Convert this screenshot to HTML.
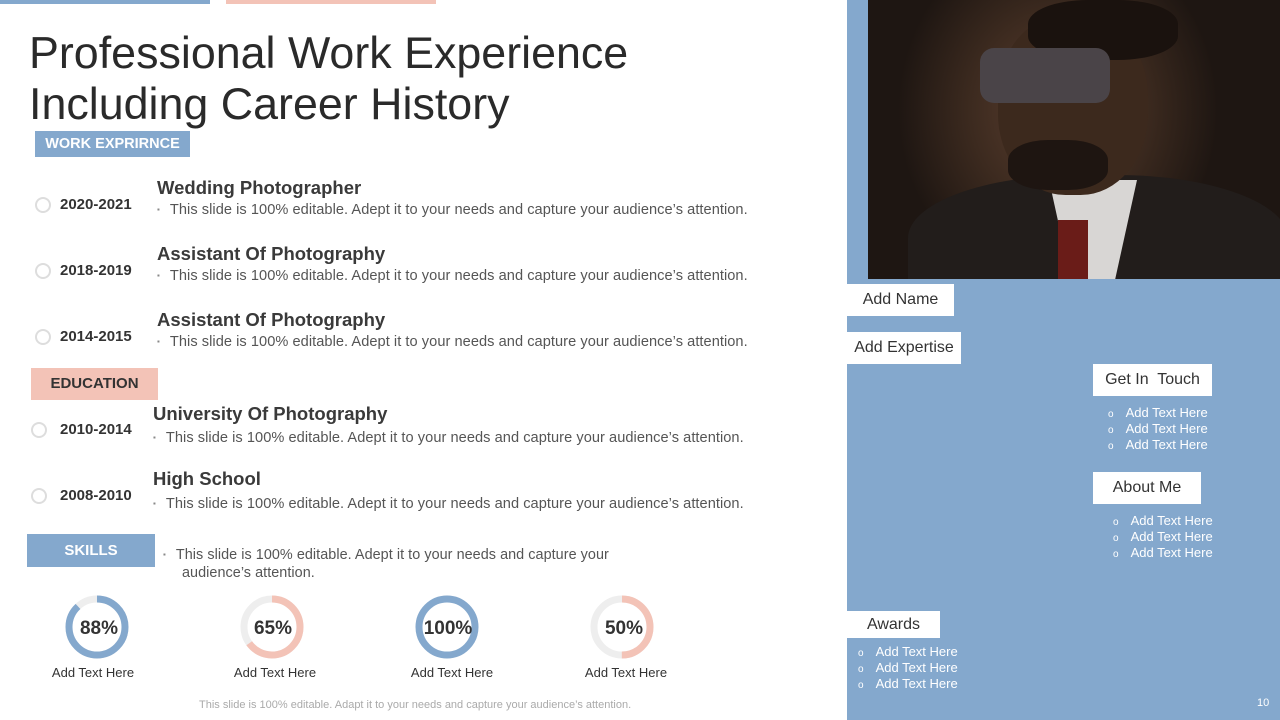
<!DOCTYPE html>
<html><head><meta charset="utf-8"><style>
body{margin:0;width:1280px;height:720px;position:relative;overflow:hidden;background:#fff;font-family:"Liberation Sans",sans-serif;color:#333}
.a{position:absolute;white-space:nowrap}
.h1{left:29px;top:28px;font-size:44.8px;line-height:51px;color:#2a2a2a}
.tag{position:absolute;font-weight:bold;font-size:15px;text-align:center;color:#fff}
.yr{font-weight:bold;font-size:15px;color:#333}
.ttl{font-weight:bold;font-size:18.5px;color:#3a3a3a}
.txt{font-size:14.6px;color:#555;letter-spacing:0.05px}
.txt:before{content:"▪";font-size:8px;color:#888;margin-right:10px;vertical-align:2px}
.circ{position:absolute;width:12px;height:12px;border:2px solid #ddd;border-radius:50%}
.wb{position:absolute;background:#fff;font-size:16px;color:#333;line-height:32px}
.li{position:absolute;color:#fff;font-size:13px}
.li div{line-height:16px;height:16px}
.li div:before{content:"o";font-size:10px;margin-right:12px}
.lab{font-size:13px;color:#333;text-align:center;width:120px}
</style></head><body>
<div class="a" style="left:0;top:0;width:210px;height:4px;background:#84a8cd"></div>
<div class="a" style="left:226px;top:0;width:210px;height:4px;background:#f3c3b7"></div>
<div class="a h1">Professional Work Experience<br>Including Career History</div>

<div class="tag" style="left:35px;top:131px;width:155px;height:26px;line-height:26px;background:#84a8cd;font-size:14.5px">WORK EXPRIRNCE</div>
<div class="circ" style="left:35px;top:197px"></div><div class="a yr" style="left:60px;top:196px">2020-2021</div>
<div class="a ttl" style="left:157px;top:177px">Wedding Photographer</div><div class="a txt" style="left:157px;top:202px">This slide is 100% editable. Adept it to your needs and capture your audience’s attention.</div>
<div class="circ" style="left:35px;top:263px"></div><div class="a yr" style="left:60px;top:262px">2018-2019</div>
<div class="a ttl" style="left:157px;top:243px">Assistant Of Photography</div><div class="a txt" style="left:157px;top:268px">This slide is 100% editable. Adept it to your needs and capture your audience’s attention.</div>
<div class="circ" style="left:35px;top:329px"></div><div class="a yr" style="left:60px;top:328px">2014-2015</div>
<div class="a ttl" style="left:157px;top:309px">Assistant Of Photography</div><div class="a txt" style="left:157px;top:334px">This slide is 100% editable. Adept it to your needs and capture your audience’s attention.</div>

<div class="tag" style="left:31px;top:368px;width:127px;height:32px;line-height:32px;background:#f3c3b7;color:#333">EDUCATION</div>
<div class="circ" style="left:31px;top:422px"></div><div class="a yr" style="left:60px;top:421px">2010-2014</div>
<div class="a ttl" style="left:153px;top:403px">University Of Photography</div><div class="a txt" style="left:153px;top:430px">This slide is 100% editable. Adept it to your needs and capture your audience’s attention.</div>
<div class="circ" style="left:31px;top:488px"></div><div class="a yr" style="left:60px;top:487px">2008-2010</div>
<div class="a ttl" style="left:153px;top:468px">High School</div><div class="a txt" style="left:153px;top:496px">This slide is 100% editable. Adept it to your needs and capture your audience’s attention.</div>

<div class="tag" style="left:27px;top:534px;width:128px;height:33px;line-height:33px;background:#84a8cd">SKILLS</div>
<div class="a txt" style="left:163px;top:546px;line-height:18px;font-size:14.4px">This slide is 100% editable. Adept it to your needs and capture your<br><span style="margin-left:19px">audience’s attention.</span></div>

<svg class="a" style="left:0;top:590px" width="700" height="75">
<g fill="none" stroke-width="7">
<circle cx="97" cy="37" r="28" stroke="#eee"/><circle cx="97" cy="37" r="28" stroke="#84a8cd" stroke-dasharray="154.8 176" transform="rotate(-90 97 37)"/>
<circle cx="272" cy="37" r="28" stroke="#eee"/><circle cx="272" cy="37" r="28" stroke="#f3c3b7" stroke-dasharray="114.4 176" transform="rotate(-90 272 37)"/>
<circle cx="447" cy="37" r="28" stroke="#84a8cd"/>
<circle cx="622" cy="37" r="28" stroke="#eee"/><circle cx="622" cy="37" r="28" stroke="#f3c3b7" stroke-dasharray="88 176" transform="rotate(-90 622 37)"/>
</g>
<g font-family="Liberation Sans" font-weight="bold" font-size="19" fill="#333" text-anchor="middle">
<text x="99" y="44">88%</text><text x="273" y="44">65%</text><text x="448" y="44">100%</text><text x="624" y="44">50%</text></g>
</svg>
<div class="a lab" style="left:33px;top:665px">Add Text Here</div>
<div class="a lab" style="left:215px;top:665px">Add Text Here</div>
<div class="a lab" style="left:392px;top:665px">Add Text Here</div>
<div class="a lab" style="left:566px;top:665px">Add Text Here</div>
<div class="a" style="left:199px;top:699px;font-size:11px;color:#aaa">This slide is 100% editable. Adapt it to your needs and capture your audience’s attention.</div>

<div class="a" style="left:847px;top:0;width:433px;height:720px;background:#84a8cd"></div>
<div class="a" style="left:868px;top:0;width:412px;height:279px;overflow:hidden;background:radial-gradient(ellipse 160px 180px at 190px 110px,#5e4030 0%,#3c2a1f 55%,#1e1612 100%)">
<div style="position:absolute;left:40px;top:175px;width:380px;height:140px;border-radius:45% 45% 0 0;background:#221d1b"></div>
<div style="position:absolute;left:170px;top:180px;width:110px;height:100px;background:#d8d6d4;clip-path:polygon(10% 0,90% 0,70% 100%,30% 100%)"></div>
<div style="position:absolute;left:190px;top:220px;width:30px;height:60px;background:#6a1c18"></div>
<div style="position:absolute;left:130px;top:15px;width:150px;height:180px;border-radius:45%;background:#3c291d"></div>
<div style="position:absolute;left:160px;top:0;width:150px;height:60px;border-radius:40%;background:#1a120e"></div>
<div style="position:absolute;left:112px;top:48px;width:130px;height:55px;border-radius:14px;background:#4a4448"></div>
<div style="position:absolute;left:140px;top:140px;width:100px;height:50px;border-radius:40%;background:#1e1511"></div>
</div>
<div class="wb" style="left:847px;top:284px;width:107px;text-align:center">Add Name</div>
<div class="wb" style="left:847px;top:332px;width:114px;text-align:center">Add Expertise</div>
<div class="wb" style="left:1093px;top:364px;width:119px;text-align:center">Get In&nbsp; Touch</div>
<div class="li" style="left:1108px;top:405px"><div>Add Text Here</div><div>Add Text Here</div><div>Add Text Here</div></div>
<div class="wb" style="left:1093px;top:472px;width:108px;text-align:center">About Me</div>
<div class="li" style="left:1113px;top:513px"><div>Add Text Here</div><div>Add Text Here</div><div>Add Text Here</div></div>
<div class="wb" style="left:847px;top:611px;width:93px;height:27px;line-height:27px;text-align:center">Awards</div>
<div class="li" style="left:858px;top:644px"><div>Add Text Here</div><div>Add Text Here</div><div>Add Text Here</div></div>
<div class="a" style="left:1257px;top:697px;font-size:11px;color:#fff">10</div>
</body></html>
